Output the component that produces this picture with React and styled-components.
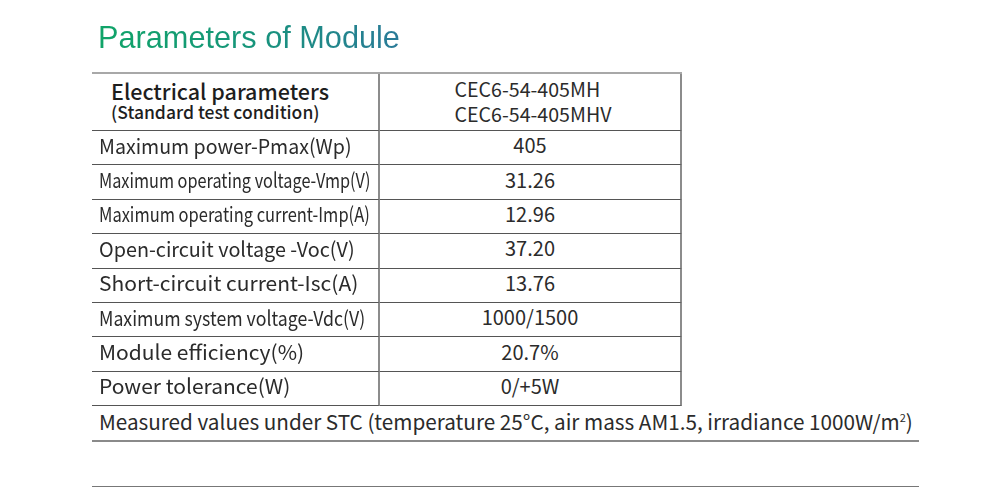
import styled, { createGlobalStyle } from "styled-components";

const Global = createGlobalStyle`
  body {
    margin: 0;
    background: #fff;
  }
`;

const Page = styled.main`
  width: 1000px;
  height: 488px;
  padding: 19px 0 0 92px;
  box-sizing: border-box;
  font-family: "Noto Sans CJK SC", "Noto Sans", sans-serif;
  color: #2b2b2b;
`;

const Title = styled.h1`
  margin: 0 0 0 6px;
  height: 53px;
  font-family: "Liberation Sans", Arial, sans-serif;
  font-weight: 400;
  font-size: 30.7px;
  line-height: 38px;
  background: linear-gradient(90deg, #10a468 0%, #16957a 50%, #2a7a98 100%);
  -webkit-background-clip: text;
  background-clip: text;
  color: transparent;
  display: inline-block;
`;

const Table = styled.section`
  width: 590px;
  display: grid;
  grid-template-columns: 288px 302px;
  border-top: 2px solid #a8a8a8;
`;

const Cell = styled.div`
  height: ${(p) => p.$h}px;
  box-sizing: border-box;
  border-bottom: 1px solid #555;
  border-right: 2px solid #8c8c8c;
  display: flex;
  align-items: center;
  justify-content: ${(p) => (p.$center ? "center" : "flex-start")};
  padding-left: ${(p) => (p.$center ? 0 : 7)}px;
  padding-bottom: ${(p) => (p.$head ? 2 : 6)}px;
  font-size: 20px;
  white-space: nowrap;
`;

const Squeeze = styled.span`
  display: inline-block;
  font-size: 20.6px;
  transform: scaleX(${(p) => p.$s});
  transform-origin: left center;
`;

const HeadLeft = styled.div`
  padding-left: 12px;
  display: flex;
  flex-direction: column;
`;

const HeadMain = styled.span`
  font-size: 21.5px;
  line-height: 22px;
  font-weight: 500;
  color: #1e1e1e;
`;

const HeadSub = styled.span`
  font-size: 17.5px;
  line-height: 20px;
  font-weight: 500;
  color: #1e1e1e;
`;

const Models = styled.div`
  display: flex;
  flex-direction: column;
  font-size: 19.6px;
  line-height: 25px;
  padding-left: 6px;
`;

const Note = styled.p`
  margin: 0;
  width: 827px;
  height: 36px;
  box-sizing: border-box;
  border-bottom: 2px solid #8a8a8a;
  padding-left: 7px;
  font-size: 20.7px;
  line-height: 22px;
  white-space: nowrap;
`;

const Sup = styled.sup`
  font-size: 11px;
`;

const Rule = styled.hr`
  margin: 44px 0 0;
  width: 827px;
  border: 0;
  border-top: 1px solid #777;
`;

const rows = [
  { label: "Maximum power-Pmax(Wp)", value: "405", s: 0.95 },
  { label: "Maximum operating voltage-Vmp(V)", value: "31.26", s: 0.79 },
  { label: "Maximum operating current-Imp(A)", value: "12.96", s: 0.8 },
  { label: "Open-circuit voltage -Voc(V)", value: "37.20", s: 0.96 },
  { label: "Short-circuit current-Isc(A)", value: "13.76", s: 1.02 },
  { label: "Maximum system voltage-Vdc(V)", value: "1000/1500", s: 0.86 },
  { label: "Module efficiency(%)", value: "20.7%", s: 1.02 },
  { label: "Power tolerance(W)", value: "0/+5W", s: 1.02 },
];

export default function App() {
  return (
    <Page>
      <Global />
      <Title>Parameters of Module</Title>
      <Table>
        <Cell $h={57} $head>
          <HeadLeft>
            <HeadMain>Electrical parameters</HeadMain>
            <HeadSub>(Standard test condition)</HeadSub>
          </HeadLeft>
        </Cell>
        <Cell $h={57} $head $center>
          <Models>
            <span>CEC6-54-405MH</span>
            <span>CEC6-54-405MHV</span>
          </Models>
        </Cell>
        {rows.map((row) => [
          <Cell key={row.label} $h={34.4}>
            <Squeeze $s={row.s}>{row.label}</Squeeze>
          </Cell>,
          <Cell key={row.label + "-v"} $h={34.4} $center>
            {row.value}
          </Cell>,
        ])}
      </Table>
      <Note>
        Measured values under STC (temperature 25°C, air mass AM1.5, irradiance
        1000W/m<Sup>2</Sup>)
      </Note>
      <Rule />
    </Page>
  );
}
